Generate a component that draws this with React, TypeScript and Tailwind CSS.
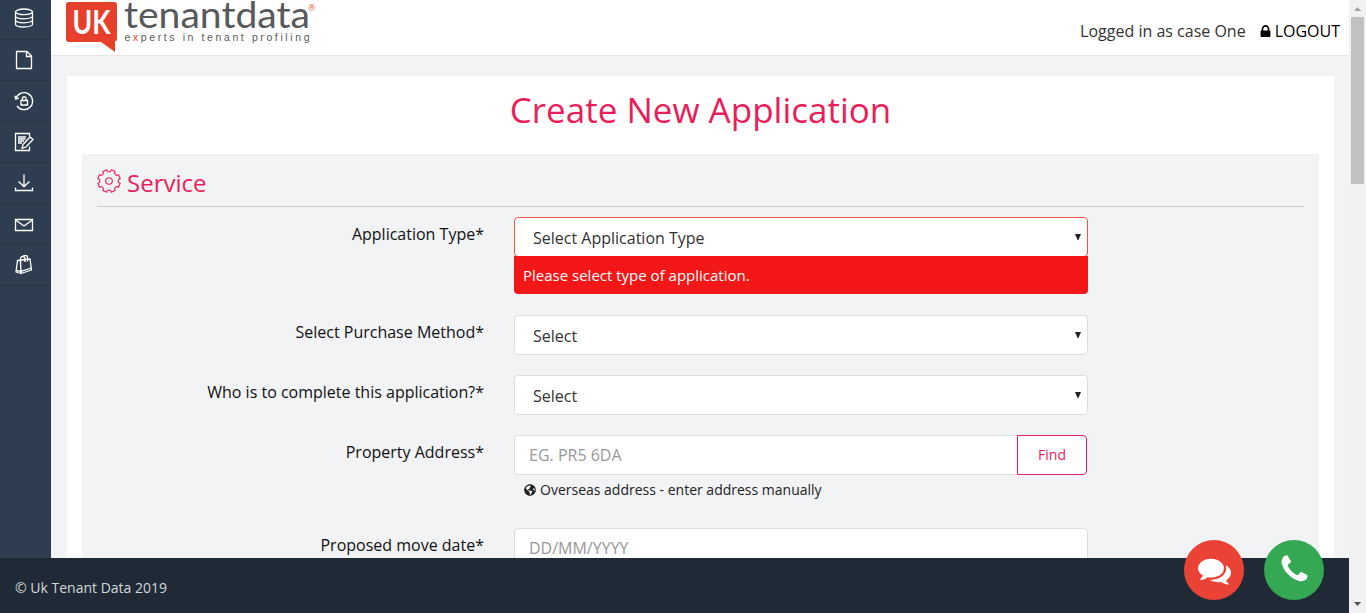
import type { ReactNode } from "react";
import { FaGlobeAmericas } from "react-icons/fa";

const sideIcons: ReactNode[] = [
  <>
    <ellipse cx="10" cy="3.8" rx="8.5" ry="2.8" />
    <path d="M1.5 3.8v12.4c0 1.600 3.800 2.800 8.500 2.800s8.500-1.200 8.500-2.800V3.800M1.500 8c0 1.600 3.800 2.800 8.500 2.800S18.500 9.600 18.500 8M1.500 12c0 1.600 3.800 2.800 8.500 2.800s8.500-1.200 8.500-2.800" />
  </>,
  <path d="M2.500 1.500h10.500l4.500 4.500v12.500h-15zM12.500 1.500v5h5" />,
  <>
    <path d="M2 7.600A8.500 8.500 0 1 1 3 14.800M.8 4.800l1 3.400 3.200-1.200" />
    <path d="M7 9.500h6.500v4.500H7zM8.400 9.500V7.600a1.850 1.850 0 0 1 3.700 0v1.900" />
  </>,
  <>
    <path d="M15.500 4.500v-3h-14v17h14v-4M4 5h8M4 7h7.500M4 9h6M4 11h4" />
    <path d="M9 12.500l7-7.500 3 2.500-7 7.500-4 1.200z" />
  </>,
  <path d="M10 1.500v12M4.500 8.500l5.500 5 5.500-5M1.500 14.500v3h17v-3" />,
  <path d="M1.500 5.500h17v11h-17zM1.500 6l8.500 6 8.500-6" />,
  <>
    <path d="M3.500 5.500l12.500-1.500 1.500 11-10.500 3.500-5-1.500zM6.500 6l.5 12.500M2 15.500l5 .8 10.500-3.300" strokeLinejoin="round" />
    <path d="M6.500 8V3.500a2.300 2.300 0 0 1 4.500-.5v4M9 2.500a2.200 2.200 0 0 1 4.500 0v4" />
  </>,
];

function Sidebar() {
  return (
    <nav className="w-[51px] shrink-0 bg-[#2e3e50] text-white">
      {sideIcons.map((icon, i) => (
        <a
          key={i}
          className={`flex items-center justify-center border-b border-[#26323f] pr-[3px] ${i === 0 ? "h-10 pb-1" : "h-[41px]"}`}
        >
          <svg viewBox="0 0 20 20" className="size-5" fill="none" stroke="currentColor" strokeWidth="1.3">
            {icon}
          </svg>
        </a>
      ))}
    </nav>
  );
}

function Logo() {
  return (
    <svg width="252" height="54" viewBox="0 0 252 54" className="shrink-0 overflow-visible">
      <path d="M3 2h45q3 0 3 3v34q0 2-2 2.500V52L35 42H3q-3 0-3-3V5q0-3 3-3z" fill="#e63f2b" />
      <text x="6.500" y="33.500" fontSize="32" textLength="38" lengthAdjust="spacingAndGlyphs" className="font-['Lato',sans-serif] font-bold" fill="#fff">UK</text>
      <text x="58" y="27.500" fontSize="36" textLength="186" lengthAdjust="spacingAndGlyphs" className="font-['Lato',sans-serif] font-normal" fill="#58595b">tenantdata</text>
      <text x="58.500" y="41" fontSize="10.500" textLength="185" className="font-['Liberation_Sans',sans-serif]" fill="#58595b">
        e<tspan fill="#e63f2b">x</tspan>perts in tenant profiling
      </text>
      <text x="242.500" y="10.500" fontSize="9" className="font-['Liberation_Sans',sans-serif]" fill="#e63f2b">®</text>
    </svg>
  );
}

function Header() {
  return (
    <header className="flex h-14 shrink-0 justify-between border-b border-[#e7e7e7] bg-white pl-[15px] pr-[9px]">
      <Logo />
      <div className="flex h-[62px] items-center text-[16px]">
        <span className="text-[#333]">Logged in as case One</span>
        <svg viewBox="0 0 1152 1408" className="ml-[14px] mr-[4px] h-[12px] w-[11px]" fill="#000">
          <path transform="translate(-320 -128)" d="M640 768h512v-192q0-106-75-181t-181-75-181 75-75 181v192zm832 96v576q0 40-28 68t-68 28h-960q-40 0-68-28t-28-68v-576q0-40 28-68t68-28h32v-192q0-184 132-316t316-132 316 132 132 316v192h32q40 0 68 28t28 68z" />
        </svg>
        <span className="text-black">LOGOUT</span>
      </div>
    </header>
  );
}

function Row({ label, className, children }: { label: string; className: string; children: ReactNode }) {
  return (
    <div className={`flex ${className}`}>
      <label className="w-[387px] shrink-0 pt-[5px] text-right text-[16px] leading-6 text-[#111]">{label}</label>
      <div className="ml-[30px] w-[574px] shrink-0">{children}</div>
    </div>
  );
}

function SelectBox({ text, error = false }: { text: string; error?: boolean }) {
  return (
    <div className={`flex h-10 items-center justify-between rounded border bg-white pl-[18px] pr-[6px] pt-px text-[16px] text-[#333] ${error ? "border-[#f0563d]" : "border-[#dcdee0]"}`}>
      <span>{text}</span>
      <svg width="6" height="6" viewBox="0 0 6 6" className="mb-[2px]" fill="#222">
        <path d="M0 0h6L3.400 6h-.8z" />
      </svg>
    </div>
  );
}

function Application() {
  return (
    <main className="ml-4 mr-[15px] mt-5 h-[600px] bg-white px-[15px]">
      <h1 className="h-[78px] pt-[9px] text-center text-[35px] leading-[49px] text-[#e91e5a]">Create New Application</h1>
      <section className="h-[500px] bg-[#f2f3f5] px-[15px]">
        <h2 className="flex h-[53px] items-center border-b border-[#c8cacb] pt-[6px] text-[24px] text-[#e91e5a]">
          <svg viewBox="0 0 24 24" className="mb-[5px] mr-[6px] size-6" fill="none" stroke="currentColor" strokeWidth="1.1">
            <path d="M9.700.8l.7 1.700q1.600.6 3.200 0l.7-1.700 3.900 1.600-.7 1.800q.7 1.500 2.300 2.300l1.800-.7 1.600 3.900-1.700.7q-.6 1.600 0 3.200l1.700.7-1.600 3.900-1.800-.7q-1.600.7-2.300 2.300l.7 1.800-3.900 1.600-.7-1.700q-1.600-.6-3.200 0l-.7 1.700-3.900-1.600.7-1.800q-.7-1.600-2.300-2.300l-1.800.7L.8 14.300l1.700-.7q.6-1.600 0-3.200L.8 9.700l1.600-3.900 1.800.7q1.600-.8 2.300-2.300l-.7-1.800z" strokeLinejoin="round" />
            <circle cx="12" cy="12" r="3.300" />
          </svg>
          Service
        </h2>
        <Row label="Application Type*" className="mt-[10px] h-[98px]">
          <SelectBox text="Select Application Type" error />
          <p className="relative -mt-px h-[38px] rounded-b bg-[#f31717] pl-[9px] text-[15px] leading-[39px] text-white">Please select type of application.</p>
        </Row>
        <Row label="Select Purchase Method*" className="h-[60px]">
          <SelectBox text="Select" />
        </Row>
        <Row label="Who is to complete this application?*" className="h-[60px]">
          <SelectBox text="Select" />
        </Row>
        <Row label="Property Address*" className="h-[93px]">
          <div className="flex h-10 w-[573px]">
            <div className="flex flex-1 items-center rounded-l border border-r-0 border-[#dcdee0] bg-white pl-[14px] text-[16px] text-[#999]">EG. PR5 6DA</div>
            <button className="w-[70px] rounded-r border border-[#e91e63] bg-white pb-0.5 text-[14px] text-[#e91e63]">Find</button>
          </div>
          <p className="flex h-[30px] items-center pb-[2px] pl-[10px] text-[14px] text-[#222]">
            <FaGlobeAmericas className="mr-[4px] mt-px size-[12px]" />
            Overseas address - enter address manually
          </p>
        </Row>
        <Row label="Proposed move date*" className="h-[60px]">
          <div className="flex h-10 items-center rounded border border-[#dcdee0] bg-white pl-[14px] text-[16px] text-[#999]">DD/MM/YYYY</div>
        </Row>
      </section>
    </main>
  );
}

function ContactButtons() {
  return (
    <div className="absolute bottom-[13px] right-[25px] flex gap-5">
      <button className="flex size-[60px] items-center justify-center rounded-full bg-[#ea4335]">
        <svg viewBox="0 0 1792 1792" className="size-[33px]" fill="#fff">
          <path d="M1408 768q0 139-94 257t-256.5 186.5-353.5 68.5q-86 0-176-16-124 88-278 128-36 9-86 16h-3q-11 0-20.5-8t-11.5-21q-1-3-1-6.5t.5-6.5 2-6l2.5-5 3.5-5.5 4-5 4.5-5 4-4.5q5-6 23-25t26-29.5 22.5-29 25-38.5 20.5-44q-124-72-195-177t-71-224q0-139 94-257t256.5-186.5 353.5-68.5 353.5 68.5 256.5 186.5 94 257zm384 256q0 120-71 224.5t-195 176.5q10 24 20.5 44t25 38.5 22.5 29 26 29.5 23 25q1 1 4 4.5t4.5 5 4 5 3.5 5.5l2.5 5 2 6 .5 6.5-1 6.5q-3 14-13 22t-22 7q-50-7-86-16-154-40-278-128-90 16-176 16-271 0-472-132 58 4 88 4 161 0 309-45t264-129q125-92 192-212t67-254q0-77-23-152 129 71 204 178t75 230z" />
        </svg>
      </button>
      <button className="flex size-[60px] items-center justify-center rounded-full bg-[#34a853]">
        <svg viewBox="0 0 1792 1792" className="mb-px size-[33px]" fill="#fff">
          <path d="M1600 1240q0 27-10 70.5t-21 68.5q-21 50-122 106-94 51-186 51-27 0-53-3.5t-57.5-12.5-47-14.5-55.5-20.5-49-18q-98-35-175-83-127-79-264-216t-216-264q-48-77-83-175-3-9-18-49t-20.5-55.5-14.5-47-12.5-57.5-3.5-53q0-92 51-186 56-101 106-122 25-11 68.5-21t70.5-10q14 0 21 3 18 6 53 76 11 19 30 54t35 63.5 31 53.5q3 4 17.5 25t21.5 35.5 7 28.5q0 20-28.5 50t-62 55-62 53-28.5 46q0 9 5 22.5t8.5 20.5 14 24 11.5 19q76 137 174 235t235 174q2 1 19 11.5t24 14 20.5 8.5 22.5 5q18 0 46-28.5t53-62 55-62 50-28.5q14 0 28.5 7t35.5 21.5 25 17.5q25 15 53.5 31t63.5 35 54 30q70 35 76 53 3 7 3 21z" />
        </svg>
      </button>
    </div>
  );
}

function Scrollbar() {
  return (
    <div className="flex w-[17px] shrink-0 flex-col items-center bg-[#f1f1f1]">
      <svg width="17" height="17" viewBox="0 0 17 17" fill="#a3a3a3">
        <path d="M5 11l3.500-4 3.500 4z" />
      </svg>
      <div className="h-[167px] w-[13px] bg-[#c1c1c1]" />
      <svg width="17" height="17" viewBox="0 0 17 17" className="mt-auto" fill="#505050">
        <path d="M5 6l3.500 4L12 6z" />
      </svg>
    </div>
  );
}

export default function App() {
  return (
    <div className="flex h-[613px] w-[1366px] overflow-hidden font-['Open_Sans',sans-serif]">
      <div className="relative flex flex-1 flex-col">
        <div className="flex h-[558px] shrink-0 overflow-hidden">
          <Sidebar />
          <div className="flex h-[558px] w-[1298px] flex-col overflow-hidden bg-[#f2f3f5]">
            <Header />
            <Application />
          </div>
        </div>
        <footer className="h-[55px] bg-[#1f2a36] pl-[15px] text-[14px] leading-[60px] text-[#d5d8db]">© Uk Tenant Data 2019</footer>
        <ContactButtons />
      </div>
      <Scrollbar />
    </div>
  );
}
